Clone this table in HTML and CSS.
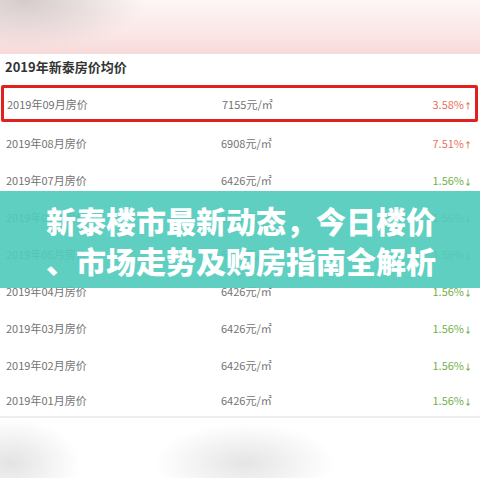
FILE: index.html
```html
<!DOCTYPE html>
<html lang="zh-CN">

<head>
    <meta charset="utf-8" />
    <title>新泰楼市最新动态</title>
    <link rel="stylesheet" href="styles.css">
</head>

<body>
    <div class="page">
        <div class="top-blur"></div>

        <h2 class="title">2019年新泰房价均价</h2>

        <div class="prices">
            <div class="row current">
                <span class="month">2019年09月房价</span>
                <span class="price">7155元/㎡</span>
                <span class="change up">3.58%<i class="arrow">↑</i></span>
            </div>
            <div class="row">
                <span class="month">2019年08月房价</span>
                <span class="price">6908元/㎡</span>
                <span class="change up">7.51%<i class="arrow">↑</i></span>
            </div>
            <div class="row">
                <span class="month">2019年07月房价</span>
                <span class="price">6426元/㎡</span>
                <span class="change down">1.56%<i class="arrow">↓</i></span>
            </div>
            <div class="row">
                <span class="month">2019年06月房价</span>
                <span class="price">6426元/㎡</span>
                <span class="change down">1.56%<i class="arrow">↓</i></span>
            </div>
            <div class="row">
                <span class="month">2019年05月房价</span>
                <span class="price">6426元/㎡</span>
                <span class="change down">1.56%<i class="arrow">↓</i></span>
            </div>
            <div class="row">
                <span class="month">2019年04月房价</span>
                <span class="price">6426元/㎡</span>
                <span class="change down">1.56%<i class="arrow">↓</i></span>
            </div>
            <div class="row">
                <span class="month">2019年03月房价</span>
                <span class="price">6426元/㎡</span>
                <span class="change down">1.56%<i class="arrow">↓</i></span>
            </div>
            <div class="row">
                <span class="month">2019年02月房价</span>
                <span class="price">6426元/㎡</span>
                <span class="change down">1.56%<i class="arrow">↓</i></span>
            </div>
            <div class="row last">
                <span class="month">2019年01月房价</span>
                <span class="price">6426元/㎡</span>
                <span class="change down">1.56%<i class="arrow">↓</i></span>
            </div>
        </div>

        <div class="bottom-blur"></div>

        <!-- headline banner lying over the table -->
        <div class="banner">
            <p>新泰楼市最新动态，今日楼价<br>、市场走势及购房指南全解析</p>
        </div>
    </div>
</body>

</html>
```

FILE: styles.css
```css
* {
    box-sizing: border-box;
}

body {
    margin: 0;
    background: #fff;
    font-family: "Microsoft YaHei", "Noto Sans CJK SC", "Noto Sans", sans-serif;
}

.page {
    position: relative;
    width: 480px;
    height: 480px;
    overflow: hidden;
}

.top-blur {
    height: 54px;
    background:
        radial-gradient(ellipse 120px 50px at 25px 0px, rgba(195, 185, 185, .7), rgba(195, 185, 185, 0)),
        linear-gradient(180deg, #fdf7f7 0%, #fbe7e7 60%, #f8dada 100%);
}

.title {
    margin: 0;
    height: 31px;
    padding-left: 5px;
    line-height: 26px;
    font-size: 13px;
    font-weight: bold;
    color: #333;
}

.row {
    display: flex;
    align-items: center;
    height: 37px;
    padding: 0 8px 0 6px;
    font-size: 11px;
    color: #737373;
}

.row.current {
    margin: 0 2px 2px 1px;
    border: 3px solid #e3201b;
    border-radius: 2px;
    padding: 0 3px 0 3px;
}

.row.last {
    height: 35px;
    border-bottom: 2px solid #eee;
}

.month {
    width: 215px;
}

.price {
    flex: 1;
}

.change {
    text-align: right;
}

.change .arrow {
    font-style: normal;
    font-size: 8px;
    font-weight: bold;
}

.change.up {
    color: #e8725c;
}

.change.down {
    color: #74b04a;
}

.bottom-blur {
    height: 60px;
    background:
        radial-gradient(ellipse 70px 45px at 10px 45px, rgba(220, 220, 220, .8), rgba(220, 220, 220, 0)),
        radial-gradient(ellipse 90px 40px at 245px 45px, rgba(222, 222, 222, .8), rgba(222, 222, 222, 0));
}

.banner {
    position: absolute;
    left: 0;
    top: 191px;
    width: 480px;
    height: 97px;
    display: flex;
    align-items: center;
    justify-content: center;
    background: rgba(80, 203, 188, .92);
}

.banner p {
    margin: 0;
    padding-left: 2px;
    font-family: "Noto Sans CJK SC", sans-serif;
    font-size: 30px;
    font-weight: 900;
    line-height: 40px;
    color: #fff;
    text-align: left;
}
```
